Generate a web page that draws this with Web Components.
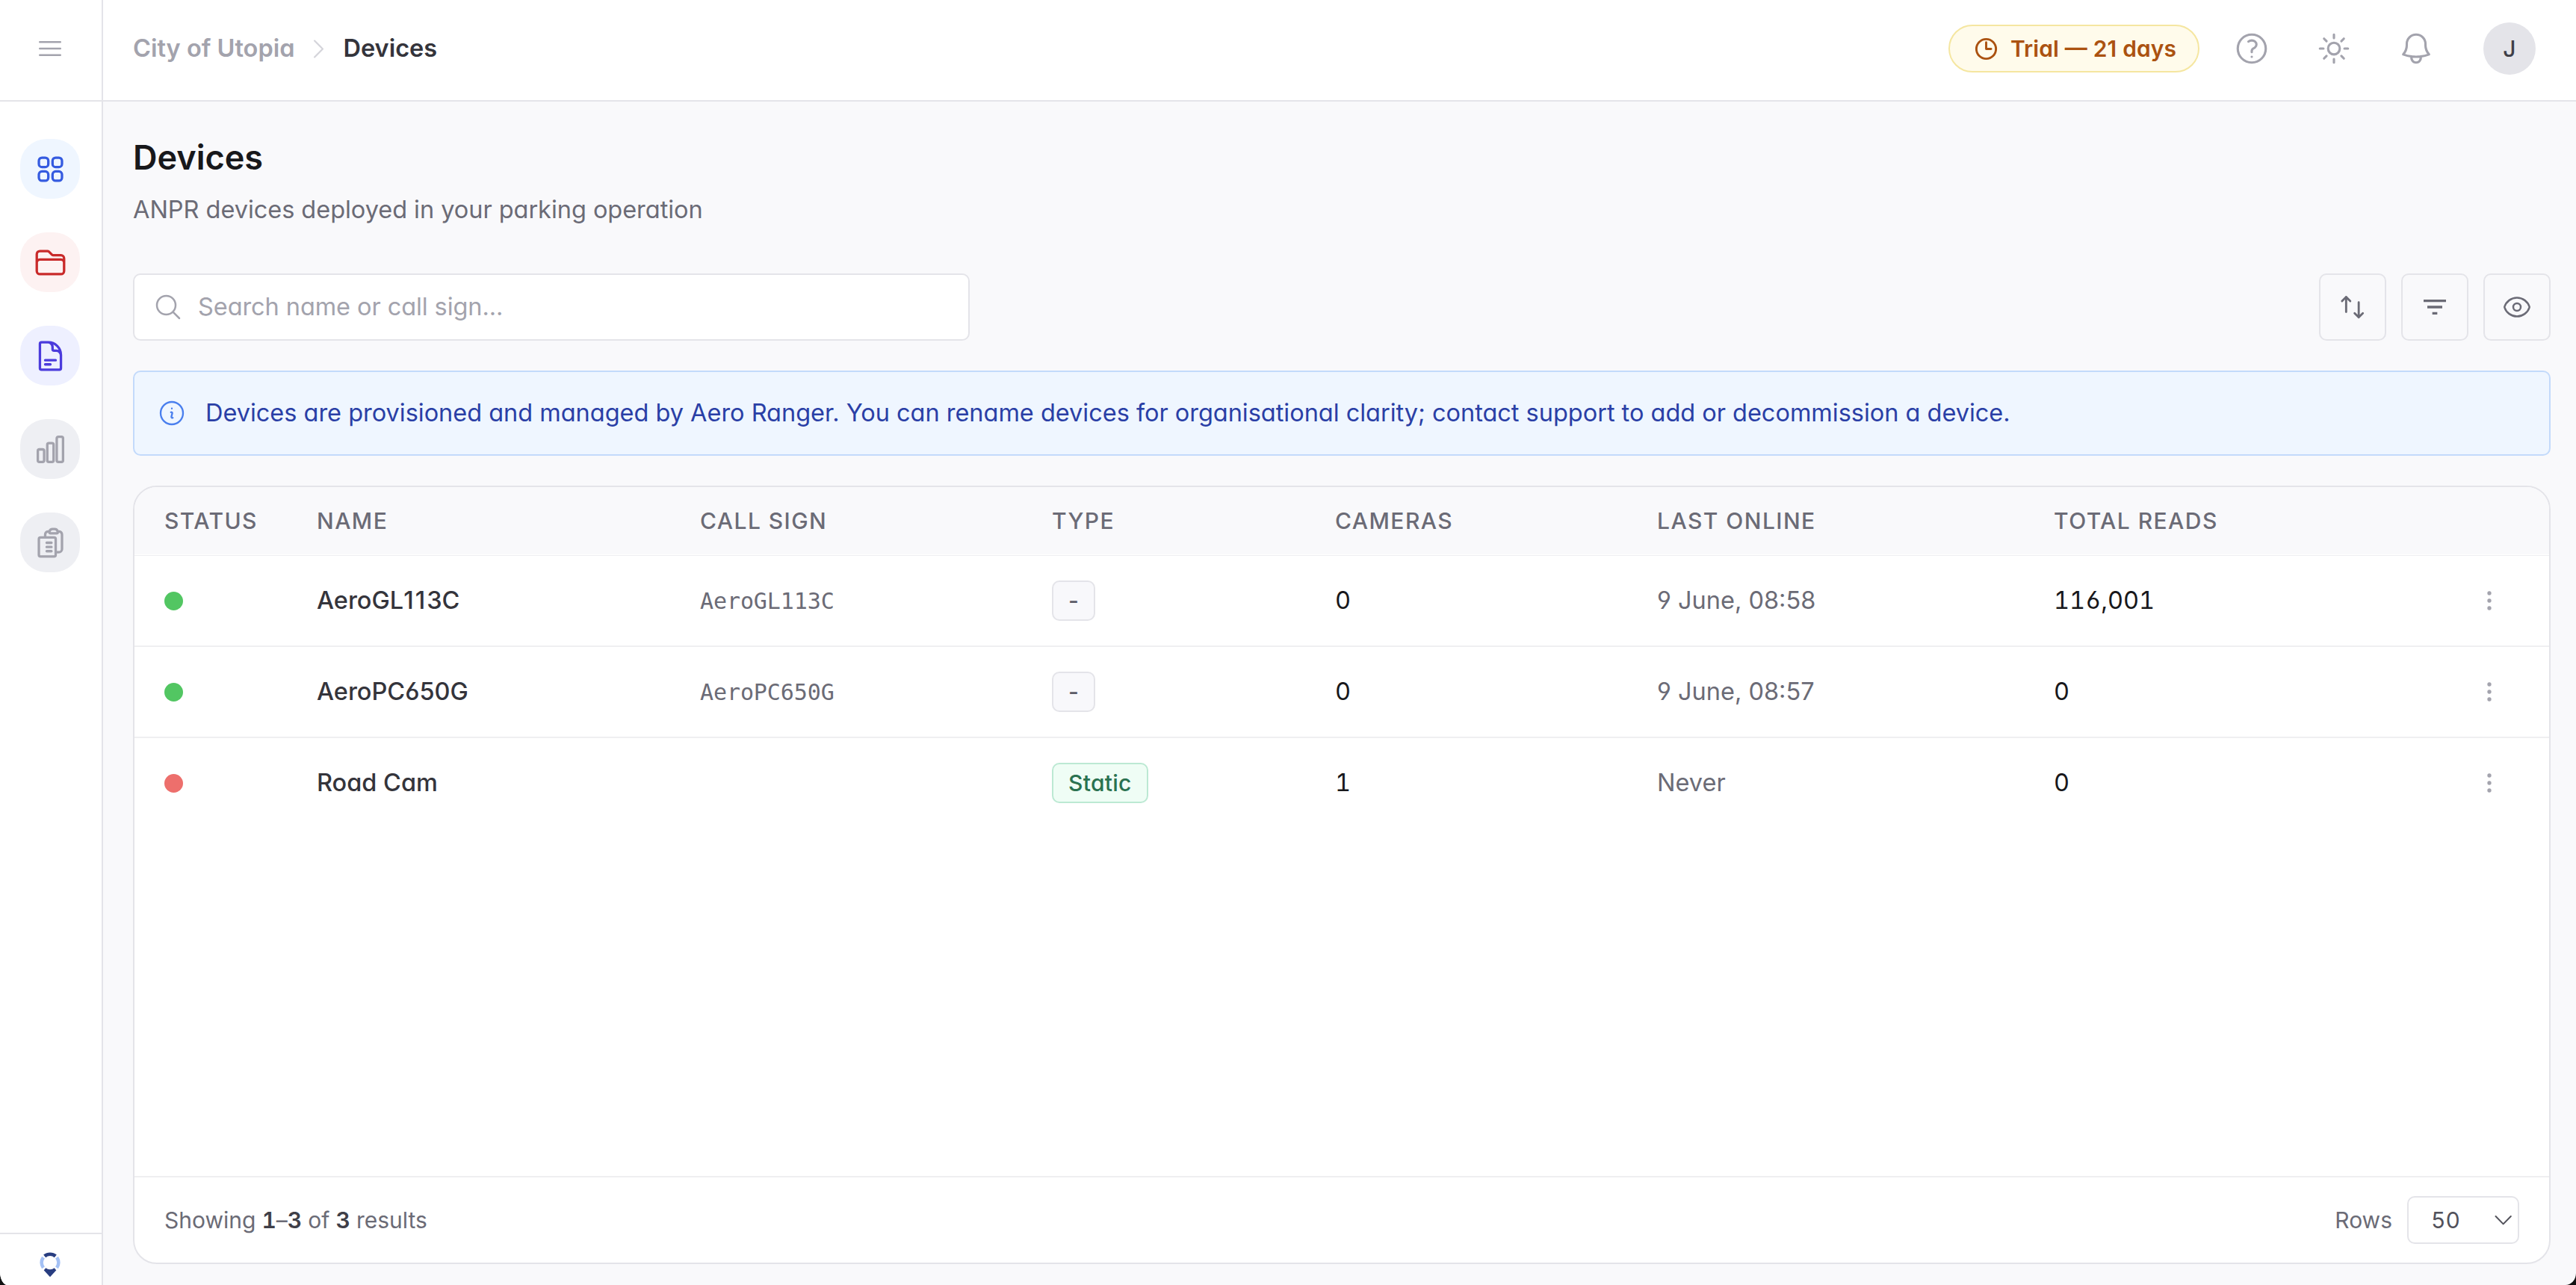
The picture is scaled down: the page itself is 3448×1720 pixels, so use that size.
<!DOCTYPE html>
<html lang="en">
<head>
<meta charset="utf-8">
<title>Devices</title>
<style>
  html { background: #111; }
  body {
    margin: 0;
    font-family: Inter, "Liberation Sans", sans-serif;
    font-size: 32.5px;
    line-height: 1.5;
    font-feature-settings: "cv02", "cv03", "cv04", "cv11";
    font-optical-sizing: none;
    color: #18181b;
    --line: #e4e4e9;
    --line-soft: #efeff1;
    --muted: #a3a3ad;
    --text-2: #6b6b76;
    --page: #f9f9fb;
  }
</style>
</head>
<body>
<app-shell>
  <app-sidebar slot="sidebar">
    <nav-tile icon="grid" tone="blue"></nav-tile>
    <nav-tile icon="folder" tone="red"></nav-tile>
    <nav-tile icon="document" tone="indigo"></nav-tile>
    <nav-tile icon="chart" tone="gray"></nav-tile>
    <nav-tile icon="clipboard" tone="gray"></nav-tile>
  </app-sidebar>
  <app-topbar slot="topbar" initial="J">
    <span slot="parent">City of Utopia</span>
    <span slot="current">Devices</span>
    <span slot="trial">Trial — 21 days</span>
  </app-topbar>
  <page-heading>
    <span slot="title">Devices</span>
    <span slot="subtitle">ANPR devices deployed in your parking operation</span>
  </page-heading>
  <list-toolbar>Search name or call sign...</list-toolbar>
  <info-alert>Devices are provisioned and managed by Aero Ranger. You can rename devices for organisational clarity; contact support to add or decommission a device.</info-alert>
  <device-table></device-table>
</app-shell>

<script>
const ICONS = {
  menu: '<path d="M3.75 6.75h16.5M3.75 12h16.5m-16.5 5.25h16.5"/>',
  chevron: '<path d="m8.25 4.5 7.5 7.5-7.5 7.5"/>',
  clock: '<path d="M12 6v6h4.5m4.5 0a9 9 0 1 1-18 0 9 9 0 0 1 18 0Z"/>',
  help: '<path d="M9.879 7.519c1.171-1.025 3.071-1.025 4.242 0 1.172 1.025 1.172 2.687 0 3.712-.203.179-.43.326-.67.442-.745.361-1.45.999-1.45 1.827v.75M21 12a9 9 0 1 1-18 0 9 9 0 0 1 18 0Zm-9 5.25h.008v.008H12v-.008Z"/>',
  sun: '<path d="M12 3v2.25m6.364.386-1.591 1.591M21 12h-2.25m-.386 6.364-1.591-1.591M12 18.75V21m-4.773-4.227-1.591 1.591M5.25 12H3m4.227-4.773L5.636 5.636M15.75 12a3.75 3.75 0 1 1-7.5 0 3.75 3.75 0 0 1 7.5 0Z"/>',
  bell: '<path d="M14.857 17.082a23.848 23.848 0 0 0 5.454-1.31A8.967 8.967 0 0 1 18 9.75V9A6 6 0 0 0 6 9v.75a8.967 8.967 0 0 1-2.312 6.022c1.733.64 3.56 1.085 5.455 1.31m5.714 0a24.255 24.255 0 0 1-5.714 0m5.714 0a3 3 0 1 1-5.714 0"/>',
  grid: '<path d="M3.75 6A2.25 2.25 0 0 1 6 3.75h2.25A2.25 2.25 0 0 1 10.5 6v2.25a2.25 2.25 0 0 1-2.25 2.25H6a2.25 2.25 0 0 1-2.25-2.25V6ZM3.75 15.75A2.25 2.25 0 0 1 6 13.5h2.25a2.25 2.25 0 0 1 2.25 2.25V18a2.25 2.25 0 0 1-2.25 2.25H6A2.25 2.25 0 0 1 3.75 18v-2.25ZM13.5 6a2.25 2.25 0 0 1 2.25-2.25H18A2.25 2.25 0 0 1 20.25 6v2.25A2.25 2.25 0 0 1 18 10.5h-2.25a2.25 2.25 0 0 1-2.25-2.25V6ZM13.5 15.75a2.25 2.25 0 0 1 2.25-2.25H18a2.25 2.25 0 0 1 2.25 2.25V18A2.25 2.25 0 0 1 18 20.25h-2.25A2.25 2.25 0 0 1 13.5 18v-2.25Z"/>',
  folder: '<path d="M2.25 12.75V12A2.25 2.25 0 0 1 4.5 9.75h15A2.25 2.25 0 0 1 21.75 12v.75m-8.69-6.44-2.12-2.12a1.5 1.5 0 0 0-1.061-.44H4.5A2.25 2.25 0 0 0 2.25 6v12a2.25 2.25 0 0 0 2.25 2.25h15A2.25 2.25 0 0 0 21.75 18V9a2.25 2.25 0 0 0-2.25-2.25h-5.379a1.5 1.5 0 0 1-1.06-.44Z"/>',
  document: '<path d="M19.5 14.25v-2.625a3.375 3.375 0 0 0-3.375-3.375h-1.5A1.125 1.125 0 0 1 13.5 7.125v-1.5a3.375 3.375 0 0 0-3.375-3.375H8.25m0 12.75h7.5m-7.5 3H12M10.5 2.25H5.625c-.621 0-1.125.504-1.125 1.125v17.25c0 .621.504 1.125 1.125 1.125h12.75c.621 0 1.125-.504 1.125-1.125V11.25a9 9 0 0 0-9-9Z"/>',
  chart: '<path d="M3 13.125C3 12.504 3.504 12 4.125 12h2.25c.621 0 1.125.504 1.125 1.125v6.75C7.5 20.496 6.996 21 6.375 21h-2.25A1.125 1.125 0 0 1 3 19.875v-6.75ZM9.75 8.625c0-.621.504-1.125 1.125-1.125h2.25c.621 0 1.125.504 1.125 1.125v11.25c0 .621-.504 1.125-1.125 1.125h-2.25a1.125 1.125 0 0 1-1.125-1.125V8.625ZM16.5 4.125c0-.621.504-1.125 1.125-1.125h2.25C20.496 3 21 3.504 21 4.125v15.75c0 .621-.504 1.125-1.125 1.125h-2.25a1.125 1.125 0 0 1-1.125-1.125V4.125Z"/>',
  clipboard: '<path d="M9.3 12h3.45M9.3 15h3.45M9.3 18h3.45m3 .75H18a2.25 2.25 0 0 0 2.25-2.25V6.108c0-1.135-.845-2.098-1.976-2.192a48.424 48.424 0 0 0-1.123-.08m-5.801 0c-.065.21-.1.433-.1.664 0 .414.336.75.75.75h4.5a.75.75 0 0 0 .75-.75 2.25 2.25 0 0 0-.1-.664m-5.8 0A2.251 2.251 0 0 1 13.5 2.25H15c1.012 0 1.867.668 2.15 1.586m-5.8 0c-.376.023-.75.05-1.124.08C9.095 4.01 8.25 4.973 8.25 6.108V8.25m0 0H4.875c-.621 0-1.125.504-1.125 1.125v11.25c0 .621.504 1.125 1.125 1.125h9.75c.621 0 1.125-.504 1.125-1.125V9.375c0-.621-.504-1.125-1.125-1.125H8.25Z"/>',
  search: '<path d="m21 21-5.197-5.197m0 0A7.5 7.5 0 1 0 5.196 5.196a7.5 7.5 0 0 0 10.607 10.607Z"/>',
  sort: '<path d="M6.8 15.9V3.8M3.5 7.2l3.3-3.3 3.3 3.3M16.9 8.2v12.1M13.6 17l3.3 3.3 3.3-3.3"/>',
  filter: '<path fill="currentColor" stroke="none" d="M3 6h18v2H3zM6 11h12v2H6zM10 16h4v2h-4z"/>',
  eye: '<path d="M2.036 12.322a1.012 1.012 0 0 1 0-.639C3.423 7.51 7.36 4.5 12 4.5c4.638 0 8.573 3.007 9.963 7.178.07.207.07.431 0 .639C20.577 16.49 16.64 19.5 12 19.5c-4.638 0-8.573-3.007-9.963-7.178Z"/><path d="M15 12a3 3 0 1 1-6 0 3 3 0 0 1 6 0Z"/>',
  info: '<path d="m11.25 11.25.041-.02a.75.75 0 0 1 1.063.852l-.708 2.836a.75.75 0 0 0 1.063.853l.041-.021M21 12a9 9 0 1 1-18 0 9 9 0 0 1 18 0Zm-9-3.75h.008v.008H12V8.25Z"/>',
  more: '<path d="M12 6.75a.75.75 0 1 1 0-1.5.75.75 0 0 1 0 1.5ZM12 12.75a.75.75 0 1 1 0-1.5.75.75 0 0 1 0 1.5ZM12 18.75a.75.75 0 1 1 0-1.5.75.75 0 0 1 0 1.5Z"/>',
  down: '<path d="m6.3 9 6.1 6.2L18.500 9"/>'
};

class AppIcon extends HTMLElement {
  connectedCallback() {
    const size = this.getAttribute('size') || 40;
    const weight = this.getAttribute('weight') || 1.5;
    this.attachShadow({ mode: 'open' }).innerHTML = `
      <style>
        :host { display: block; flex: none; width: ${size}px; height: ${size}px; }
        svg { display: block; width: 100%; height: 100%; }
      </style>
      <svg viewBox="0 0 24 24" fill="none" stroke="currentColor" stroke-width="${weight}"
        stroke-linecap="round" stroke-linejoin="round">${ICONS[this.getAttribute('name')]}</svg>
    `;
  }
}
customElements.define('app-icon', AppIcon);

class AppShell extends HTMLElement {
  constructor() {
    super();
    this.attachShadow({ mode: 'open' }).innerHTML = `
      <style>
        :host {
          display: grid;
          grid-template-columns: 138px 1fr;
          height: 100vh;
          background: var(--page);
          border-radius: 0 0 14px 10px / 0 0 16px 18px;
          overflow: hidden;
        }
        .column { display: flex; flex-direction: column; min-width: 0; }
        main {
          flex: 1;
          display: flex;
          flex-direction: column;
          gap: 40px;
          padding: 42px 34px 28px 40px;
        }
      </style>
      <slot name="sidebar"></slot>
      <div class="column">
        <slot name="topbar"></slot>
        <main><slot></slot></main>
      </div>
    `;
  }
}
customElements.define('app-shell', AppShell);

class AppSidebar extends HTMLElement {
  constructor() {
    super();
    this.attachShadow({ mode: 'open' }).innerHTML = `
      <style>
        :host {
          display: flex;
          flex-direction: column;
          background: #fff;
          border-right: 2px solid var(--line);
        }
        .menu, .brand {
          display: flex;
          justify-content: center;
          box-sizing: border-box;
          padding-right: 2px;
        }
        .menu {
          height: 136px;
          padding-top: 45px;
          border-bottom: 2px solid var(--line);
          color: var(--muted);
        }
        nav {
          flex: 1;
          display: flex;
          flex-direction: column;
          align-items: center;
          gap: 45px;
          padding: 50px 2px 0 0;
        }
        .brand {
          height: 70px;
          padding-top: 18px;
          border-top: 2px solid var(--line);
        }
      </style>
      <div class="menu"><app-icon name="menu"></app-icon></div>
      <nav><slot></slot></nav>
      <div class="brand">
        <svg width="40" height="40" viewBox="0 0 40 40" fill="none" stroke-width="4.700">
          <path stroke="#283d80" d="M12.700 11.400A11.300 11.300 0 0 1 27.300 11.400"/>
          <path stroke="#a4c1f5" d="M29 13.200A11.300 11.300 0 0 1 29 26.800M11 13.200A11.300 11.300 0 0 0 11 26.800"/>
          <path fill="#283d80" d="M14.300 27.200A9 9 0 0 0 25.700 27.200L28.300 30.300L20 39.200L11.700 30.300Z"/>
        </svg>
      </div>
    `;
  }
}
customElements.define('app-sidebar', AppSidebar);

const TONES = {
  blue: ['#eff6ff', '#355be0'],
  red: ['#fdf2f2', '#c92a2a'],
  indigo: ['#eef0ff', '#4b3bdc'],
  gray: ['#eeeff3', '#a3a3ad']
};

class NavTile extends HTMLElement {
  connectedCallback() {
    const [bg, fg] = TONES[this.getAttribute('tone')];
    this.attachShadow({ mode: 'open' }).innerHTML = `
      <style>
        :host {
          display: grid;
          place-items: center;
          width: 80px;
          height: 80px;
          border-radius: 35px;
          background: ${bg};
          color: ${fg};
        }
      </style>
      <app-icon name="${this.getAttribute('icon')}" size="45" weight="1.75"></app-icon>
    `;
  }
}
customElements.define('nav-tile', NavTile);

class AppTopbar extends HTMLElement {
  connectedCallback() {
    this.attachShadow({ mode: 'open' }).innerHTML = `
      <style>
        :host {
          display: flex;
          align-items: center;
          justify-content: space-between;
          box-sizing: border-box;
          height: 136px;
          padding: 0 54px 4px 40px;
          background: #fff;
          border-bottom: 2px solid var(--line);
          font-weight: 600;
        }
        .crumbs, .actions { display: flex; align-items: center; }
        .crumbs { gap: 15px; color: var(--muted); }
        .crumbs app-icon { color: #d4d4da; }
        .current { color: #34343b; }
        .actions { gap: 60px; color: var(--muted); }
        .trial {
          display: flex;
          align-items: center;
          gap: 15px;
          box-sizing: border-box;
          width: 336px;
          height: 64px;
          padding: 0 0 0 31px;
          margin-right: -15px;
          border: 2px solid #f5e6a0;
          border-radius: 32px;
          background: #fffbeb;
          color: #ab5210;
          font-size: 30px;
          word-spacing: 0.500px;
        }
        .avatar {
          display: grid;
          place-items: center;
          width: 70px;
          height: 70px;
          margin-left: 5px;
          border-radius: 50%;
          background: #e4e4e9;
          color: #3f3f48;
          font-size: 30px;
          font-weight: 500;
        }
      </style>
      <div class="crumbs">
        <slot name="parent"></slot>
        <app-icon name="chevron" size="35"></app-icon>
        <span class="current"><slot name="current"></slot></span>
      </div>
      <div class="actions">
        <div class="trial"><app-icon name="clock" size="35" weight="2"></app-icon><slot name="trial"></slot></div>
        <app-icon name="help" size="50"></app-icon>
        <app-icon name="sun" size="50"></app-icon>
        <app-icon name="bell" size="50"></app-icon>
        <div class="avatar">${this.getAttribute('initial')}</div>
      </div>
    `;
  }
}
customElements.define('app-topbar', AppTopbar);

class PageHeading extends HTMLElement {
  constructor() {
    super();
    this.attachShadow({ mode: 'open' }).innerHTML = `
      <style>
        :host { display: block; height: 148px; }
        h1 { margin: 0; font-size: 45px; line-height: 66px; font-weight: 600; }
        p { margin: 0; padding-top: 13px; line-height: 48px; letter-spacing: -0.040px; color: var(--text-2); }
      </style>
      <h1><slot name="title"></slot></h1>
      <p><slot name="subtitle"></slot></p>
    `;
  }
}
customElements.define('page-heading', PageHeading);

class ListToolbar extends HTMLElement {
  constructor() {
    super();
    this.attachShadow({ mode: 'open' }).innerHTML = `
      <style>
        :host { display: flex; justify-content: space-between; height: 90px; }
        .search, button {
          box-sizing: border-box;
          border: 2px solid var(--line);
          border-radius: 10px;
        }
        .search {
          display: flex;
          align-items: center;
          gap: 20px;
          width: 1120px;
          padding: 0 25px;
          background: #fff;
          color: var(--muted);
          letter-spacing: -0.080px;
        }
        .buttons { display: flex; gap: 20px; }
        button {
          display: grid;
          place-items: center;
          width: 90px;
          padding: 0;
          background: none;
          color: #6b6b76;
        }
      </style>
      <div class="search"><app-icon name="search"></app-icon><slot></slot></div>
      <div class="buttons">
        <button><app-icon name="sort" weight="1.7"></app-icon></button>
        <button><app-icon name="filter"></app-icon></button>
        <button><app-icon name="eye"></app-icon></button>
      </div>
    `;
  }
}
customElements.define('list-toolbar', ListToolbar);

class InfoAlert extends HTMLElement {
  constructor() {
    super();
    this.attachShadow({ mode: 'open' }).innerHTML = `
      <style>
        :host {
          display: flex;
          align-items: center;
          gap: 25px;
          box-sizing: border-box;
          height: 114px;
          padding: 0 30px;
          border: 2px solid #c3dafb;
          border-radius: 10px;
          background: #eff6ff;
          color: #2a3fa6;
          letter-spacing: -0.020px;
        }
        app-icon { color: #4a7fee; }
      </style>
      <app-icon name="info" weight="1.4"></app-icon>
      <span><slot></slot></span>
    `;
  }
}
customElements.define('info-alert', InfoAlert);

class TypeBadge extends HTMLElement {
  connectedCallback() {
    const isStatic = this.hasAttribute('static');
    this.attachShadow({ mode: 'open' }).innerHTML = `
      <style>
        :host {
          display: inline-flex;
          align-items: center;
          box-sizing: border-box;
          height: 54px;
          padding: 0 20px;
          border: 2px solid ${isStatic ? '#bce9d3' : '#e4e4e9'};
          border-radius: 10px;
          background: ${isStatic ? '#effdf5' : '#f8f8fb'};
          color: ${isStatic ? '#2a7250' : '#5b5b66'};
          font-size: 30px;
          font-weight: 500;
          letter-spacing: 0.300px;
        }
      </style>
      <slot></slot>
    `;
  }
}
customElements.define('type-badge', TypeBadge);

const DEVICES = [
  { online: true, name: 'AeroGL113C', callSign: 'AeroGL113C', type: '-', cameras: 0, lastOnline: '9 June, 08:58', reads: '116,001' },
  { online: true, name: 'AeroPC650G', callSign: 'AeroPC650G', type: '-', cameras: 0, lastOnline: '9 June, 08:57', reads: '0' },
  { online: false, name: 'Road Cam', callSign: '', type: 'Static', cameras: 1, lastOnline: 'Never', reads: '0' }
];

class DeviceRow extends HTMLElement {
  set device(device) {
    this._device = device;
    this.render();
  }

  render() {
    const d = this._device;
    // keep "11" from closing up in names
    const name = d.name.replace('11', '<span style="letter-spacing: 2px">11</span>');
    this.attachShadow({ mode: 'open' }).innerHTML = `
      <style>
        :host {
          display: grid;
          grid-template-columns: var(--columns);
          align-items: center;
          box-sizing: border-box;
          height: 122px;
          padding: 0 40px;
          border-bottom: 2px solid var(--line-soft);
        }
        :host(:last-of-type) { border-bottom-color: transparent; }
        .dot { width: 25px; height: 25px; border-radius: 50%; background: ${d.online ? '#52c662' : '#ed6f6c'}; }
        .name { font-weight: 500; color: #34343b; }
        .call { font: 30px "DejaVu Sans Mono", monospace; letter-spacing: -0.100px; color: var(--text-2); }
        .num { font-variant-numeric: tabular-nums; }
        .last { color: var(--text-2); }
        app-icon { margin-left: 21px; color: var(--muted); }
      </style>
      <span class="dot"></span>
      <span class="name">${name}</span>
      <span class="call">${d.callSign}</span>
      <span><type-badge ${d.type === 'Static' ? 'static' : ''}>${d.type}</type-badge></span>
      <span class="num">${d.cameras}</span>
      <span class="last">${d.lastOnline}</span>
      <span class="num">${d.reads}</span>
      <app-icon name="more" weight="1.7"></app-icon>
    `;
  }
}
customElements.define('device-row', DeviceRow);

class DeviceTable extends HTMLElement {
  constructor() {
    super();
    this.attachShadow({ mode: 'open' }).innerHTML = `
      <style>
        :host {
          --columns: 204px 513px 471px 379px 431px 531px 542px 1fr;
          flex: 1;
          display: flex;
          flex-direction: column;
          border: 2px solid var(--line);
          border-radius: 32px;
          background: #fff;
          overflow: hidden;
        }
        .head {
          display: grid;
          grid-template-columns: var(--columns);
          align-items: center;
          height: 90px;
          padding: 0 40px;
          background: var(--page);
          color: var(--text-2);
          font-size: 30px;
          font-weight: 500;
          letter-spacing: 1.450px;
        }
        .rows { flex: 1; margin-top: 1px; border-top: 1px solid var(--line-soft); }
        footer {
          display: flex;
          align-items: center;
          justify-content: space-between;
          height: 114px;
          padding: 0 40px;
          border-top: 2px solid var(--line-soft);
          color: var(--text-2);
          font-size: 30px;
          font-variant-numeric: tabular-nums;
        }
        b { font-weight: 600; color: #3f3f48; }
        .size { display: flex; align-items: center; gap: 20px; }
        .select {
          display: flex;
          align-items: center;
          justify-content: space-between;
          box-sizing: border-box;
          width: 150px;
          height: 64px;
          padding: 0 0 0 30px;
          border: 2px solid var(--line);
          border-radius: 10px;
          color: #52525b;
        }
      </style>
      <div class="head">
        <span>STATUS</span><span>NAME</span><span>CALL SIGN</span><span>TYPE</span>
        <span>CAMERAS</span><span>LAST ONLINE</span><span>TOTAL READS</span>
      </div>
      <div class="rows"></div>
      <footer>
        <span>Showing <b>1</b>–<b>3</b> of <b>3</b> results</span>
        <div class="size">
          <span>Rows</span>
          <div class="select"><span>50</span><app-icon name="down" weight="1.2"></app-icon></div>
        </div>
      </footer>
    `;
    const rows = this.shadowRoot.querySelector('.rows');
    DEVICES.forEach(device => {
      const row = document.createElement('device-row');
      row.device = device;
      rows.append(row);
    });
  }
}
customElements.define('device-table', DeviceTable);
</script>
</body>
</html>
